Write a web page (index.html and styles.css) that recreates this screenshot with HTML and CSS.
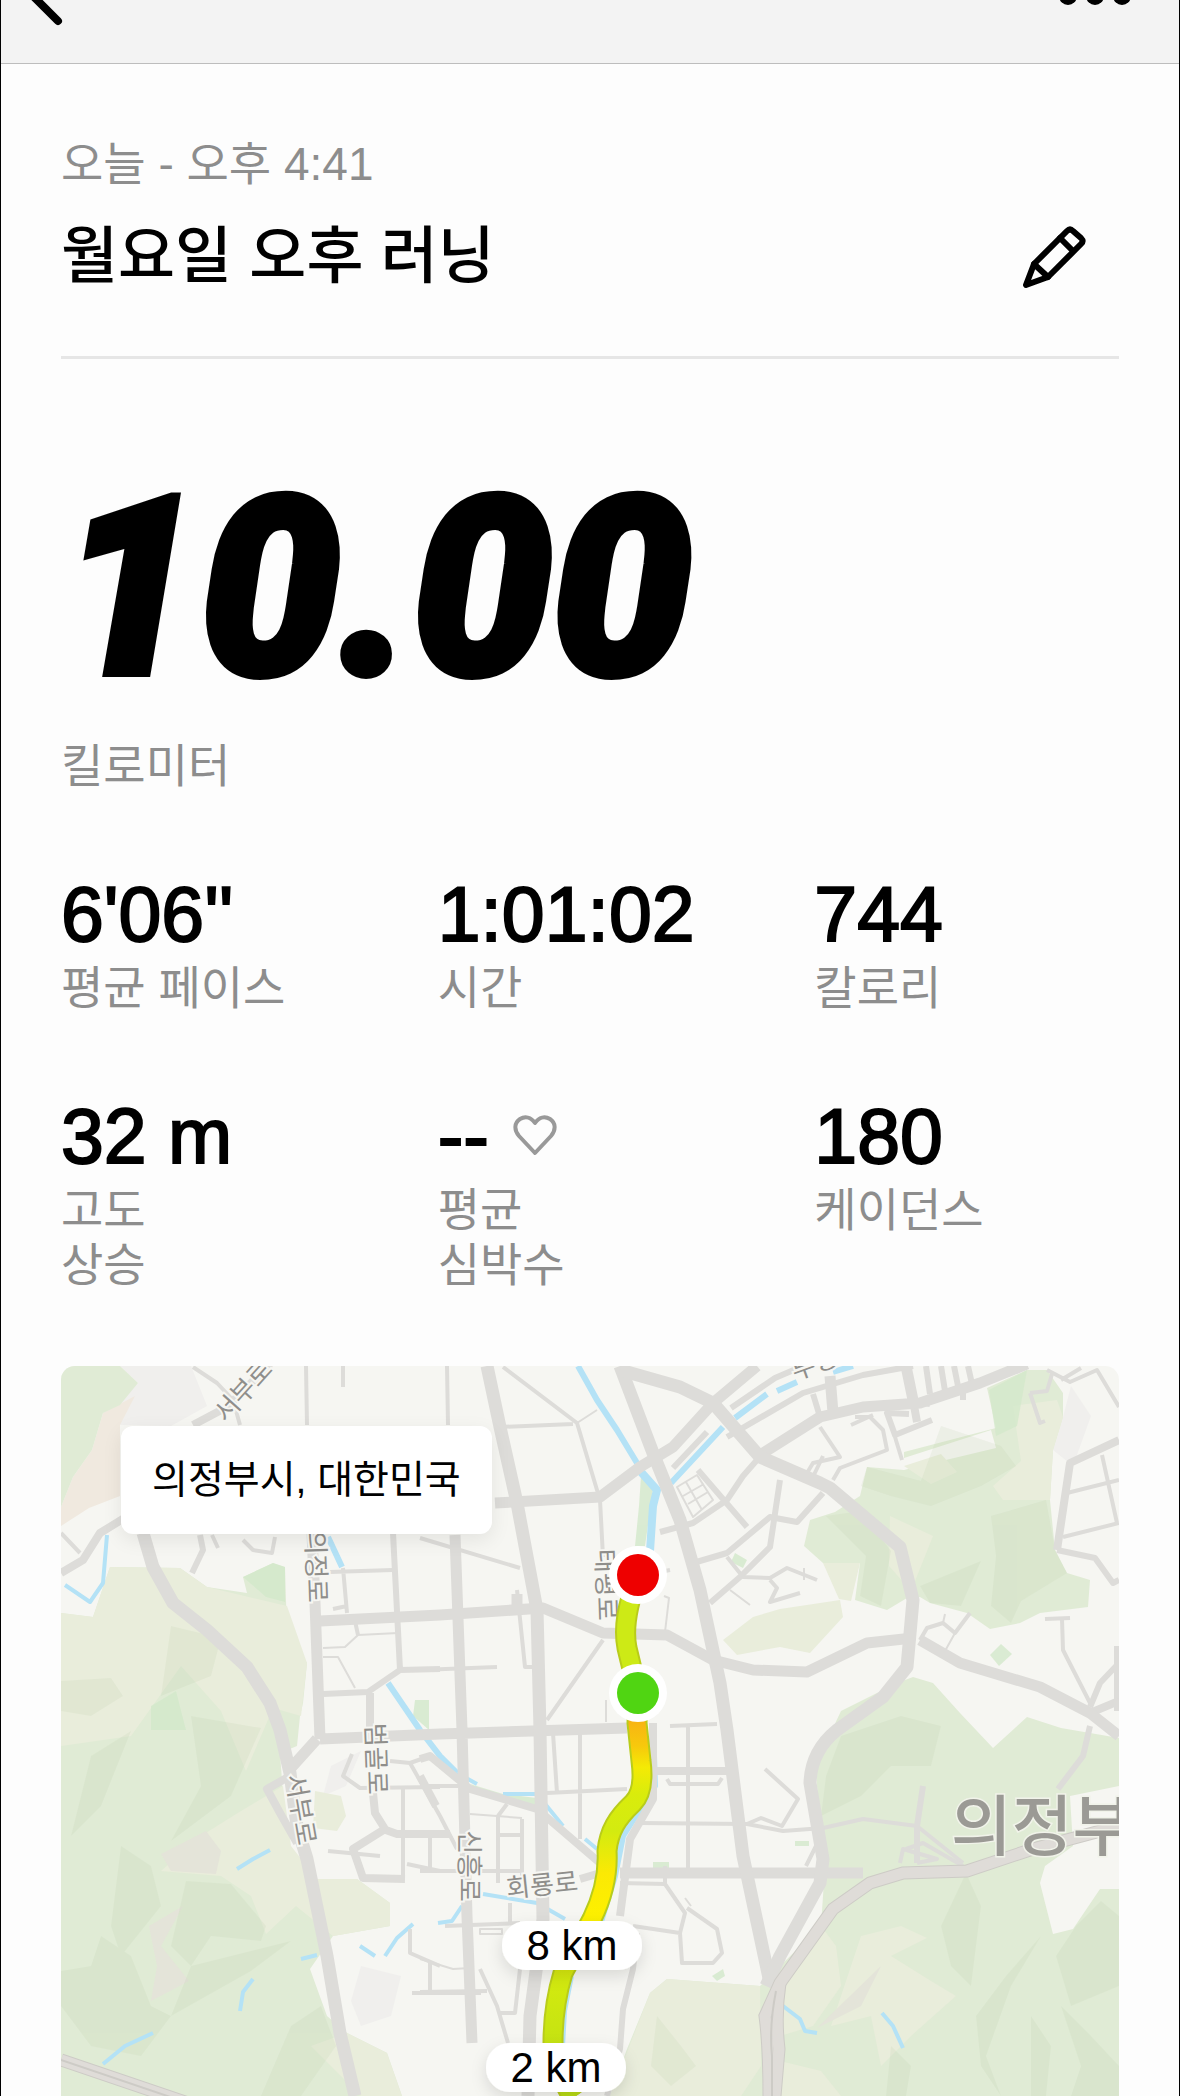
FILE: index.html
```html
<!doctype html>
<html lang="ko">
  <head>
    <meta charset="UTF-8" />
    <meta name="viewport" content="width=device-width, initial-scale=1.0" />
    <title>월요일 오후 러닝</title>
    <link rel="stylesheet" href="styles.css">
  </head>
  <body>
    <header class="topbar">
      <button type="button" class="icon-button" aria-label="뒤로">
        <svg width="36" height="28" viewBox="0 0 36 28">
          <path d="M0 -9L30 21" fill="none" stroke="#000" stroke-width="8" stroke-linecap="round" />
        </svg>
      </button>
      <button type="button" class="icon-button" aria-label="더 보기">
        <svg width="74" height="28" viewBox="0 0 74 28">
          <circle cx="10" cy="-4" r="9" />
          <circle cx="37" cy="-4" r="9" />
          <circle cx="64" cy="-4" r="9" />
        </svg>
      </button>
    </header>

    <main class="run">
      <section class="run-header">
        <p class="run-date">오늘 - 오후 4:41</p>
        <div class="run-title">
          <h1>월요일 오후 러닝</h1>
          <button type="button" class="icon-button" aria-label="이름 편집">
            <svg width="66" height="64" viewBox="0 0 66 64" fill="none" stroke="#000" stroke-width="6" stroke-linejoin="round" stroke-linecap="round">
              <path d="M5 60L13 39L46 6Q49 3 52 6L60 13Q63 16 60 19L27 52Z" />
              <path d="M39 13L51 25M13 39L27 52" />
            </svg>
          </button>
        </div>
      </section>

      <section class="distance">
        <p class="distance-value">10.00</p>
        <p class="label">킬로미터</p>
      </section>

      <section class="stats">
        <div class="stat">
          <p class="value">6'06''</p>
          <p class="label">평균 페이스</p>
        </div>
        <div class="stat">
          <p class="value">1:01:02</p>
          <p class="label">시간</p>
        </div>
        <div class="stat">
          <p class="value">744</p>
          <p class="label">칼로리</p>
        </div>
        <div class="stat">
          <p class="value">32 m</p>
          <p class="label">고도<br>상승</p>
        </div>
        <div class="stat">
          <p class="value">
            --
            <svg class="heart" width="44" height="42" viewBox="0 0 44 42">
              <path d="M22 38L6 21C1 15 1 8 7 4C12 1 18 2 22 8C26 2 32 1 37 4C43 8 43 15 38 21Z" />
            </svg>
          </p>
          <p class="label">평균<br>심박수</p>
        </div>
        <div class="stat">
          <p class="value">180</p>
          <p class="label">케이던스</p>
        </div>
      </section>

      <section class="map">
        <svg class="map-canvas" viewBox="0 0 1058 730" role="img" aria-label="러닝 경로 지도">
          <defs>
            <linearGradient id="pace" gradientUnits="userSpaceOnUse" x1="0" y1="200" x2="0" y2="730">
              <stop offset="0" stop-color="#cdea16" />
              <stop offset="0.2" stop-color="#cdea16" />
              <stop offset="0.29" stop-color="#f8b313" />
              <stop offset="0.34" stop-color="#f7c90c" />
              <stop offset="0.38" stop-color="#f4ea05" />
              <stop offset="0.43" stop-color="#d9ec0c" />
              <stop offset="0.5" stop-color="#d3eb10" />
              <stop offset="0.58" stop-color="#fbe904" />
              <stop offset="0.66" stop-color="#fdf000" />
              <stop offset="0.78" stop-color="#d3ea0f" />
              <stop offset="1" stop-color="#b9dd14" />
            </linearGradient>
            <filter id="shadow" x="-30%" y="-30%" width="160%" height="190%">
              <feDropShadow dx="0" dy="6" stdDeviation="8" flood-color="#000" flood-opacity="0.12" />
            </filter>
          </defs>

          <rect class="land" width="1058" height="730" />

          <!-- hill shading outside the woods -->
          <g class="shade">
            <path d="M59 0L130 0L146 40L110 60L60 59L42 47L77 17Z" />
            <path d="M1010 20L1030 50L1012 100L992 84L1002 51Z" />
            <path d="M270 400L300 385L285 420L262 430Z" />
            <path d="M300 600L340 610L330 650L300 660L290 635Z" />
          </g>
          <path class="sand" d="M42 47L74 30L59 59L59 130L28 142L0 160V141L12 111L31 84Z" />

          <!-- woods -->
          <g class="wood">
            <path d="M0 0H59L77 17L59 39L42 47L31 84L12 111L0 141Z" />
            <path d="M0 247L32 251L49 201L119 202L146 221L186 227L182 211L212 197L224 201L226 267L246 297L242 337L239 350L236 380L219 387L226 483L256 513L296 513L329 537L329 560L272 570L249 603L266 650L286 667L326 687L341 730H0Z" />
            <path d="M926 22L966 4L986 4L1002 27V51L992 84L989 134L994 184L1006 207L1029 214L1027 241L979 247L959 257L929 263L906 247L869 237L859 231L846 232L826 244L794 234L799 197L762 197L743 180L749 154L774 146L799 130L806 101L843 104L935 82L930 64L843 92V86L935 62Z" />
            <path d="M836 317L852 311L872 317L899 347L932 382L966 351L1000 362L1058 372V730H549L566 683L589 627L606 613L699 620L719 600L760 560L764 500L754 400L780 345Z" />
          </g>
          <g class="meadow">
            <path d="M254 425L280 430L285 450L276 465L252 462Z" />
            <path d="M49 201L119 202L146 221L226 240L246 297L240 350L212 342L185 405L160 345L120 300L70 370L0 380V247L32 251Z" />
            <path d="M662 274L692 251L719 243L779 234L782 251L749 287L719 281L676 289Z" />
            <path d="M762 197H799L790 235L778 233Z" />
            <path d="M952 40L996 34L1002 51L992 84L989 134H942L932 120L960 95Z" />
            <path d="M829 150L872 170L850 225L828 200Z" />
            <path d="M843 100L880 88L896 106L870 118Z" />
            <path d="M180 445L222 420L230 480L256 513L296 513L329 537V560L272 570L235 540L205 568L190 530L160 510L100 505L140 470Z" />
            <path d="M250 680L286 667L326 687L341 730H300Z" />
            <path d="M760 560L775 580L780 620L752 660L719 670L712 640L719 610Z" />
            <path d="M589 627L606 613L699 620L700 700L680 730H549Z" />
            <path d="M800 570L840 560L866 572L830 590L870 615L895 630L850 670L820 700L810 650L770 660Z" />
            <path d="M719 695L760 705L780 730H719Z" />
          </g>
          <g class="rock">
            <path d="M100 488L145 465L160 485L155 508L110 505Z" />
            <path d="M88 560L122 540L100 580L128 615L90 635L96 600Z" />
            <path d="M756 662L820 600L800 640Z" />
          </g>

          <!-- ridges and slopes -->
          <g class="ridge">
            <path d="M0 315L50 312L62 330L30 350L0 345Z" />
            <path d="M110 260L160 272L150 310L100 330Z" />
            <path d="M30 390L70 365L40 440L10 470Z" />
            <path d="M130 350L200 362L170 430L110 475L140 420Z" />
            <path d="M125 515L170 518L205 560L200 575L150 570L130 600L110 580Z" />
            <path d="M40 570L70 590L90 640L110 650L80 690L30 680L0 640V605L30 600Z" />
            <path d="M60 480L90 500L100 540L60 590L50 560Z" />
            <path d="M130 600L230 575L190 605L110 650Z" />
            <path d="M230 660L260 640L275 680L240 730H200Z" />
            <path d="M880 60L940 80L955 100L920 120L870 140L830 130L800 120L806 101L860 115Z" />
            <path d="M930 150L985 134L994 184L1006 207L960 235L950 257L930 240L935 190Z" />
            <path d="M859 220L920 195L900 240L869 237Z" />
            <path d="M765 150L800 145L830 185L820 240L799 230L805 190Z" />
            <path d="M780 370L840 350L880 360L870 400L830 400L800 430L760 450L765 410Z" />
            <path d="M905 507L920 540L910 620L890 600L880 560Z" />
            <path d="M980 570L950 620L925 690L940 730L920 700L915 650L945 610Z" />
            <path d="M1040 535L1058 550V620L1010 640L995 590L1015 560Z" />
            <path d="M1000 640L1030 670L1058 700V730H1010L1020 700Z" />
            <path d="M970 650L990 680L985 730H970Z" />
            <path d="M830 680L850 700L845 730H825Z" />
            <path d="M596 650L620 680L635 700L610 720L590 700Z" />
          </g>
          <g class="grove">
            <path d="M182 211L212 197L224 201V236L205 231Z" />
            <path d="M90 340L115 325L125 364L90 364Z" />
            <path d="M354 334H368V364L352 350Z" />
            <path d="M940 278L951 288L938 300L929 289Z" />
            <path d="M674 187L686 194L682 202L670 196Z" />
            <path d="M592 496H608V503H592Z" />
            <path d="M734 475H748V480H734Z" />
            <path d="M651 610L662 603L664 610L656 615Z" />
            <path d="M409 418L442 428L476 432L474 440L420 430Z" />
            <path d="M580 110L592 124L584 180H574L578 140Z" />
            <path d="M928 24L966 4L956 60L935 70Z" />
          </g>
          <path class="land" d="M1009 430L1058 420V523H1039L1012 563L992 568L979 517L984 500L1012 480Z" />

          <!-- streams -->
          <g class="water">
            <path d="M517 0L536 34L556 64L576 97" />
            <path class="w8" d="M580 106L596 124L592 140L589 185" />
            <path d="M610 117L662 61M674 52L706 28M716 25L736 16M772 6L792 0" />
            <path class="w4" d="M46 169L42 217L29 236L4 219" />
            <path d="M267 171L281 201M327 317L359 364L379 390L396 407" />
            <path class="w4" d="M396 407L416 418M442 428H476L502 460M524 473L536 483" />
            <path class="w4" d="M422 528L476 537L504 553M401 540L391 555L377 557" />
            <path class="w4" d="M176 503L192 493L209 484M192 613L182 626L179 645M92 667L64 680L42 698" />
            <path class="w4" d="M240 593L256 589M299 580L314 590M324 590L336 572L352 558" />
            <path class="w4" d="M722 640L739 653L744 665L756 667M821 647L832 660L842 682" />
            <path d="M592 360L594 420L562 470L554 510L534 575M510 610L503 645L501 680" />
          </g>

          <!-- small streets -->
          <g class="road w2">
            <path d="M262 282L284 281L297 269L337 267M262 291H277L294 322" />
            <path d="M616 121L636 109L652 134L632 151ZM622 130L643 118M627 138L647 126M625 116L641 144" />
            <path d="M669 224L689 239M603 230L608 232L604 266M545 334V356M516 57L536 44" />
            <path d="M359 593L392 603L409 602M409 448L461 452M419 563H441V568H419Z" />
            <path d="M884 285L894 267M882 257L884 248M743 202V214M624 532L630 540" />
          </g>
          <g class="road w4">
            <path d="M132 1L156 17L172 34L179 59M245 0L246 59M282 0V21M0 167L19 187" />
            <path d="M151 169L157 182M182 174L192 184L211 187L214 171" />
            <path d="M269 206L332 204M282 202L286 247M272 243L286 240M297 269L294 255" />
            <path d="M386 0L387 59M442 1L516 57L539 134L542 191M439 61L512 58" />
            <path d="M359 172L459 202M456 224L464 301L472 301M359 304L436 301M542 274L486 354" />
            <path d="M519 367V473M492 367L496 427M486 427L566 423M609 360L656 358M627 360V503" />
            <path d="M579 457L686 458L722 465L762 462L802 453L856 460L902 497M606 413L609 418H657L661 412" />
            <path d="M704 403L737 433L721 460L700 452L686 458M359 420H397" />
            <path d="M437 517V450L446 438M461 453V510M437 469H461M359 505H459M369 470V503M449 537V557" />
            <path d="M559 517L604 518L624 547L619 567L621 597H652L661 587L656 563L626 542M572 560L619 567M604 500V518" />
            <path d="M359 626L426 625M369 595V626M419 603L436 640L447 677M459 603L454 647H439M384 560L459 557" />
            <path d="M267 485L319 490M379 421L299 422L282 410L291 388M329 395L349 397L379 450L396 483M349 397L366 391L379 397" />
            <path d="M346 498L379 505M369 473V500M349 563V587L379 600M369 597V627M351 627H420M342 420V513" />
            <path d="M759 61L779 91L752 97L746 107M772 114L779 102L826 84L822 64L809 51H794M834 71L841 94M790 59L812 49" />
            <path d="M666 191L682 211L709 212L726 202L756 214M709 214L716 222L709 236L739 227M599 206L609 204" />
            <path d="M1058 114L1006 127M1058 157L1002 171M1041 89L1056 157M986 4L1009 16L1036 4L1058 41M1000 14L1020 2" />
            <path d="M969 27L986 25L991 8M969 27L979 57L984 55M984 253L1009 252M1001 253L1002 284L1029 337" />
            <path d="M859 274L866 262L882 257L894 267L909 247M839 497L842 483L876 493L856 497M845 483L862 477L902 500" />
            <path d="M745 500L755 480M749 117L762 90" />
          </g>
          <g class="road w6">
            <path d="M139 169L142 184L131 207M332 167L339 304M379 303L339 304L307 326L262 328" />
            <path d="M719 114L709 181L679 211L649 237M696 94L682 110L666 134L632 157L599 166M637 104L686 161" />
            <path d="M762 127L736 156L709 151L666 187L632 197M871 54L834 69L826 47L848 48" />
            <path d="M666 71L742 27L802 9L852 0M646 66L612 102M670 42L714 12L742 0M759 51L752 28" />
            <path d="M1029 360L1022 390L997 423M862 420L856 460V497M1029 341L1039 317L1058 297M1056 280V345" />
            <path d="M576 567L572 603L562 643L559 683L546 730M996 184L1034 192L1052 217L1058 214" />
            <path d="M865 0L869 28M880 0L884 25M893 0L897 20M907 0L911 18M902 20V34M869 38L858 36" />
          </g>
          <g class="road w8">
            <path d="M132 59L166 41L209 -2M0 207L22 194L39 167L70 148M309 327V373" />
            <path d="M312 427L314 447L324 463L292 483L302 512L344 513M322 463L336 468H389" />
            <path d="M229 410L206 423L219 447L236 477M596 405H669M359 393L369 390L409 423L476 443L539 497M519 513L536 508" />
            <path d="M592 357V433L569 473L559 550M1058 74L1009 97L996 184M852 34L856 56M1029 347L1058 335" />
            <path d="M359 410L375 440" />
          </g>
          <g class="road w11">
            <path d="M251 167L254 237L259 373M259 373L379 368L566 362M394 169L401 364L406 550L411 677" />
            <path d="M259 255L379 249L482 242L542 267L606 269L652 294L692 304L746 306L806 277L852 272" />
            <path d="M859 274L899 297L979 321L1029 347L1058 370M434 137L539 131L579 101L612 81L652 37L696 0" />
            <path d="M696 91L759 51L802 41L859 37L919 17L966 -2M769 10L772 47M845 0L852 34M559 507H802" />
            <path d="M229 403L256 373M456 228V242" />
          </g>
          <g class="road w13">
            <path d="M82 167L92 201L112 237L146 264L186 301L209 337L219 364L229 407L236 460L246 493L266 590L279 667L294 730" />
            <path d="M426 0L439 61L456 137L476 244L479 364L482 553L469 650L467 730" />
            <path d="M559 0L592 87L619 154L639 224L659 317L666 364L682 490L709 617" />
            <path d="M559 4L619 21L652 37L699 91L759 117L769 122L839 181L852 234L846 301L822 331L776 364Q750 385 749 417L762 493L759 517L719 590L705 620" />
          </g>

          <!-- expressways with a darker casing -->
          <g class="casing">
            <path d="M1058 460L972 483L906 505L842 507L809 517L772 543L719 617L704 650Q708 680 708 730" />
            <path d="M719 617Q714 650 718 683L714 730M0 694L130 738" />
          </g>
          <g class="express">
            <path d="M1058 460L972 483L906 505L842 507L809 517L772 543L719 617L704 650Q708 680 708 730" />
            <path d="M719 617Q714 650 718 683L714 730M0 694L130 738" />
          </g>
          <path class="lane" d="M0 694L130 738M715 625Q708 660 711 690V730" />

          <g class="street-name">
            <text transform="translate(189 31) rotate(-48)">서부로</text>
            <text transform="translate(246 201) rotate(88)">의정로</text>
            <text transform="translate(536 219) rotate(88)">태평로</text>
            <text transform="translate(306 393) rotate(88)">범골로</text>
            <text transform="translate(231 445) rotate(80)">서부로</text>
            <text transform="translate(399 500) rotate(90)">신흥로</text>
            <text transform="translate(482 528) rotate(-6)">회룡로</text>
            <text transform="translate(768 2) rotate(-20)">부용천</text>
          </g>
          <text class="city-name" x="890" y="484">의정부시</text>

          <!-- route -->
          <path class="route-edge" d="M577 210C566 240 562 262 566 282L577 328L576 357L580 395Q584 425 572 437C556 452 548 465 546 485Q548 518 531 553L502 607Q492 640 492 677Q494 705 512 732" />
          <path class="route" d="M577 210C566 240 562 262 566 282L577 328L576 357L580 395Q584 425 572 437C556 452 548 465 546 485Q548 518 531 553L502 607Q492 640 492 677Q494 705 512 732" />

          <circle class="marker-ring" cx="577" cy="209" r="29" />
          <circle class="marker-end" cx="577" cy="209" r="21" />
          <circle class="marker-ring" cx="577" cy="327" r="29" />
          <circle class="marker-start" cx="577" cy="327" r="21" />

          <g class="km">
            <rect x="441" y="555" width="140" height="49" rx="24" filter="url(#shadow)" />
            <text x="511" y="594">8 km</text>
            <rect x="425" y="677" width="140" height="49" rx="24" filter="url(#shadow)" />
            <text x="495" y="716">2 km</text>
          </g>
        </svg>
        <p class="place">의정부시, 대한민국</p>
      </section>
    </main>
  </body>
</html>
```
FILE: styles.css
```css
* {
  box-sizing: border-box;
}

body {
  margin: 0;
  border-left: 1px solid #000;
  border-right: 1px solid #000;
  font-family: 'Liberation Sans', 'Noto Sans CJK KR', sans-serif;
  color: #000;
  background-color: #fdfdfd;
}

h1,
p {
  margin: 0;
  font-weight: 400;
}

.icon-button {
  display: block;
  padding: 0;
  border: none;
  background: none;
  cursor: pointer;
}

.icon-button svg {
  display: block;
}

.topbar {
  display: flex;
  justify-content: space-between;
  align-items: flex-start;
  height: 64px;
  padding: 0 47px 0 27px;
  background-color: #f3f3f3;
  border-bottom: 1px solid #bdbdbd;
}

.run {
  padding: 73px 60px 0;
}

.run-header {
  padding-bottom: 59px;
  border-bottom: 3px solid #e6e6e6;
}

.run-date,
.label {
  font-size: 46px;
  line-height: 55px;
  color: #8d8d8d;
}

.run-title {
  display: flex;
  justify-content: space-between;
  align-items: center;
  margin-top: 25px;
  padding-right: 32px;
}

.run-title h1 {
  font-size: 62px;
  font-weight: 500;
  line-height: 80px;
}

.distance {
  margin-top: 110px;
}

.distance-value {
  margin-bottom: 30px;
  font-family: Roboto, sans-serif;
  font-size: 248px;
  font-style: italic;
  font-weight: 900;
  line-height: 240px;
  -webkit-text-stroke: 8px #000;
}

.stats {
  display: grid;
  grid-template-columns: repeat(3, 1fr);
  gap: 73px 72px;
  margin-top: 73px;
}

.value {
  display: flex;
  align-items: center;
  gap: 24px;
  height: 94px;
  font-size: 77px;
  line-height: 94px;
  white-space: nowrap;
  -webkit-text-stroke: 2px #000;
}

.heart {
  fill: none;
  stroke: #999;
  stroke-width: 4;
  stroke-linejoin: round;
}

.map {
  position: relative;
  margin-top: 73px;
  border-radius: 14px 14px 0 0;
  overflow: hidden;
}

.map-canvas {
  display: block;
  width: 100%;
  height: auto;
}

.place {
  position: absolute;
  top: 60px;
  left: 60px;
  padding: 26px 31px;
  border-radius: 12px;
  font-size: 39px;
  line-height: 56px;
  background-color: #fff;
  box-shadow: 0 6px 20px rgba(0, 0, 0, 0.08);
}

/* map layers */
.land {
  fill: #f6f6f2;
}

.shade {
  fill: #f0efed;
}

.sand {
  fill: #f0e9df;
}

.wood {
  fill: #e0ebd5;
}

.meadow {
  fill: #e9eddb;
}

.rock {
  fill: #e4e4d9;
}

.ridge {
  fill: #b9cba9;
  opacity: 0.16;
}

.grove {
  fill: #d3e9cb;
  opacity: 0.8;
}

.water {
  fill: none;
  stroke: #b4e2f6;
  stroke-width: 6;
  stroke-linejoin: round;
}

.road {
  fill: none;
  stroke: #dddcd9;
  stroke-linejoin: round;
}

.w2 {
  stroke-width: 2;
}

.w4 {
  stroke-width: 4;
}

.w6 {
  stroke-width: 6;
}

.w8 {
  stroke-width: 8;
}

.w11 {
  stroke-width: 11;
}

.w13 {
  stroke-width: 13;
}

.casing {
  fill: none;
  stroke: #cdcbc6;
  stroke-width: 13;
}

.express {
  fill: none;
  stroke: #dfdcd8;
  stroke-width: 11;
}

.lane {
  fill: none;
  stroke: #cdcbc6;
  stroke-width: 2;
}

.street-name {
  font-size: 26px;
  text-anchor: middle;
  fill: #8f8e8b;
  stroke: #f6f6f2;
  stroke-width: 4;
  paint-order: stroke;
}

.city-name {
  font-family: 'Noto Sans CJK KR', sans-serif;
  font-size: 66px;
  font-weight: 500;
  fill: #9b9a95;
  stroke: #f1f3ea;
  stroke-width: 3;
  paint-order: stroke;
}

.route-edge,
.route {
  fill: none;
  stroke-linejoin: round;
}

.route-edge {
  stroke: #b9cc1a;
  stroke-width: 21;
}

.route {
  stroke: url(#pace);
  stroke-width: 17;
}

.marker-ring {
  fill: #fff;
}

.marker-end {
  fill: #ee0000;
}

.marker-start {
  fill: #50d512;
}

.km rect {
  fill: #fff;
}

.km text {
  font-size: 42px;
  text-anchor: middle;
}
```
